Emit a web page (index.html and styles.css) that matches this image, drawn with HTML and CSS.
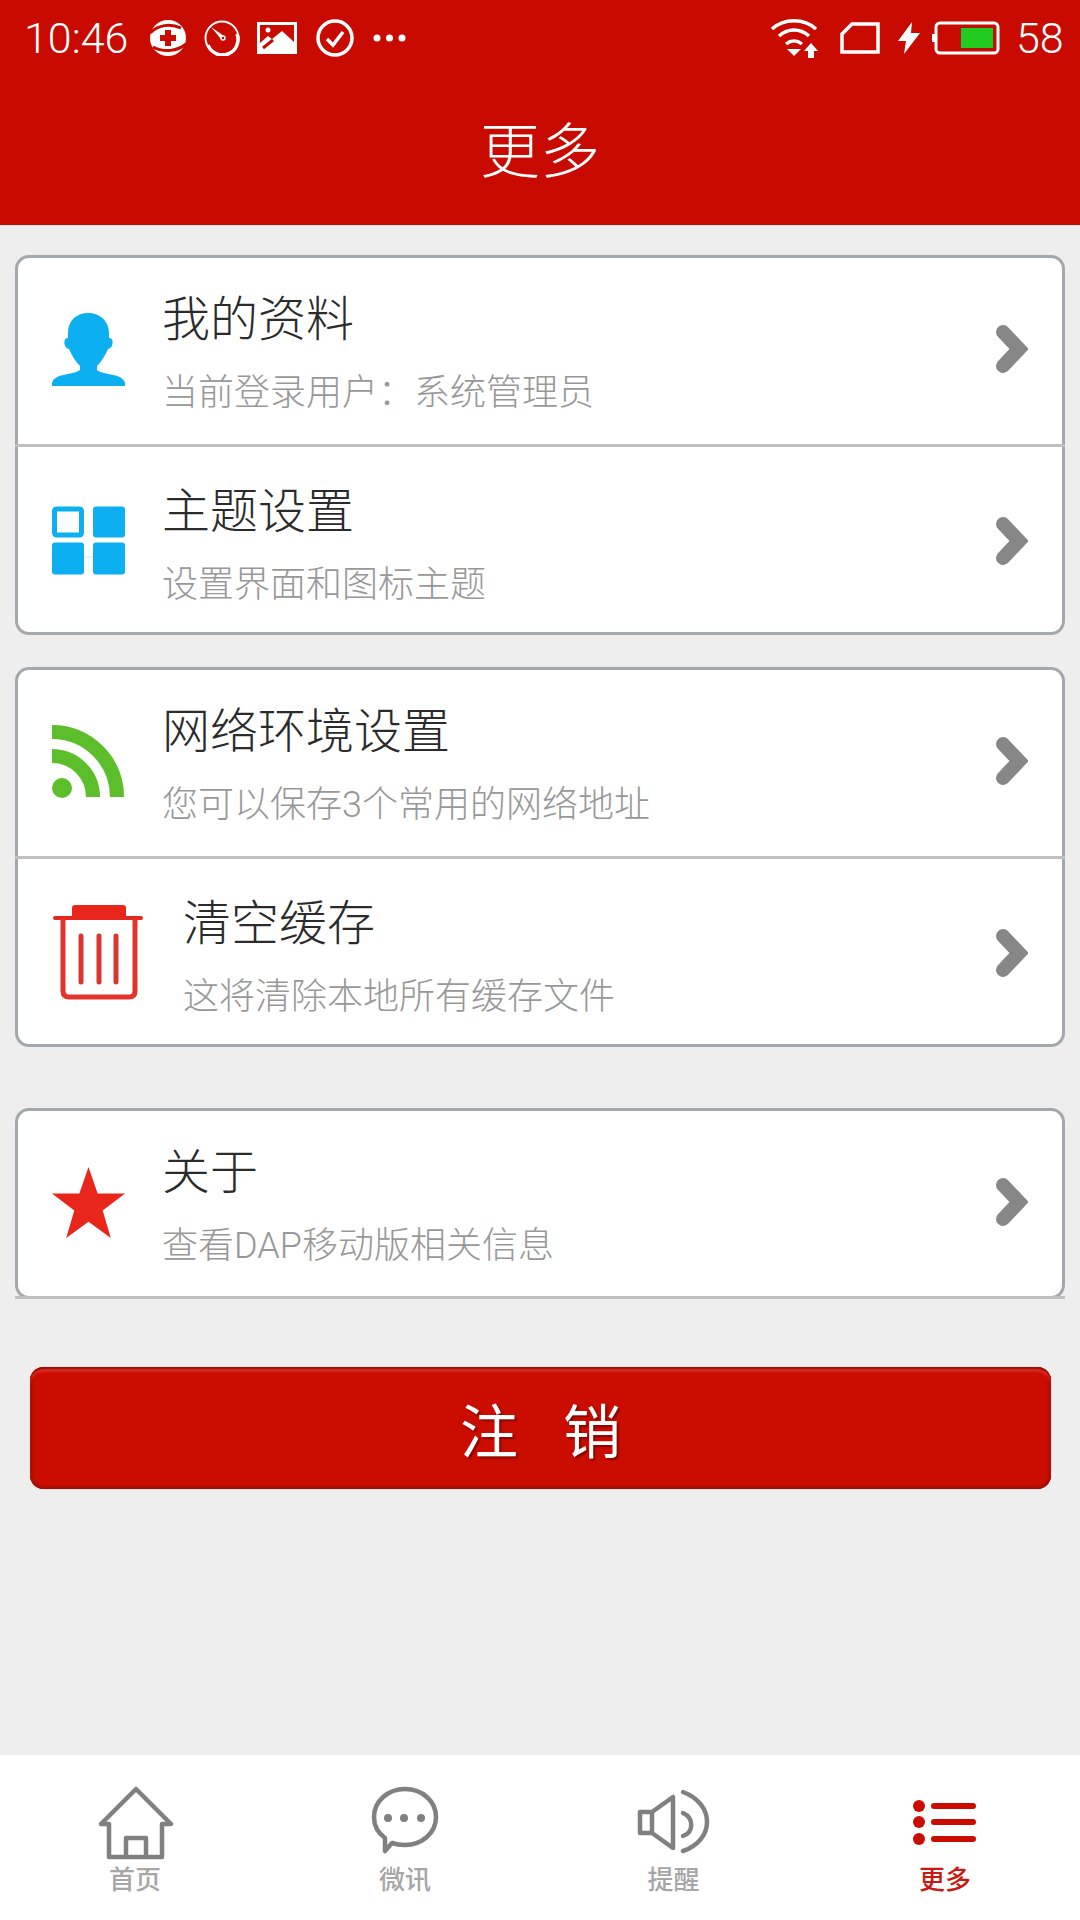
FILE: index.html
```html
<!DOCTYPE html>
<html lang="zh-CN">
<head>
<meta charset="utf-8">
<title>更多</title>
<link rel="stylesheet" href="styles.css">
</head>
<body>
<div class="page">
  <header class="header">
    <div class="status">
      <span class="time">10:46</span>
      <svg class="si si-health" viewBox="0 0 36 36"><circle class="wf" cx="18" cy="18" r="18"/><path class="rs" d="M0 13C8 5 20 3 31 8M36 24C28 31 14 33 3 27"/><path class="rf" d="M15 10H21V15H26V21H21V26H15V21H10V15H15Z"/></svg>
      <svg class="si si-clock" viewBox="0 0 36 36"><circle class="ws1" cx="18" cy="18" r="16.500"/><path class="ws3" d="M33 14A15.500 15.500 0 0 1 4 25"/><path class="wf" d="M7 7L20 16L17 19Z"/><circle class="dial-pin" cx="19" cy="18" r="2"/></svg>
      <svg class="si si-image" viewBox="0 0 40 32"><path class="wf" fill-rule="evenodd" d="M0 0H40V32H0ZM3 3V21L11 14L15 17L25 9L37 20V3Z"/><circle class="wf" cx="11" cy="8" r="2.500"/><path class="rs" d="M6 26L16 18"/></svg>
      <svg class="si si-check" viewBox="0 0 38 38"><circle class="ws3" cx="19" cy="19" r="17"/><path class="ws3" d="M11 20L17 26L27 13"/></svg>
      <svg class="si si-dots" viewBox="0 0 33 8"><circle class="wf" cx="4" cy="4" r="3.500"/><circle class="wf" cx="16.500" cy="4" r="3.500"/><circle class="wf" cx="29" cy="4" r="3.500"/></svg>
      <span class="status-fill"></span>
      <svg class="si si-wifi" viewBox="0 0 48 40"><path class="ws3" d="M2 11C14 0 34 0 46 11M9 18C18 10 30 10 39 18M16 26C21 22 27 22 32 26"/><path class="wf" d="M17 31H31L24 38Z"/><path class="wf" d="M41 25L48 33H44V40H38V33H34Z"/></svg>
      <svg class="si si-sim" viewBox="0 0 40 32"><path class="ws3" d="M12 2H38V30H2V12Z"/></svg>
      <svg class="si si-bolt" viewBox="0 0 22 32"><path class="wf" d="M14 0L0 19H8L6 32L22 11H13Z"/></svg>
      <svg class="si si-battery" viewBox="0 0 68 34"><path class="wf" d="M0 13H4V21H0Z"/><rect class="ws-batt" x="4" y="2" width="62" height="30" rx="4"/><rect class="batt-empty" x="8" y="6" width="20" height="22"/><rect class="batt-track" x="28" y="6" width="34" height="22"/><rect class="batt-level" x="29" y="7" width="32" height="20"/></svg>
      <span class="battery-num">58</span>
    </div>
    <h1 class="title">更多</h1>
  </header>

  <main class="main">
    <section class="card">
      <div class="row">
        <svg class="ico" viewBox="0 0 73 73"><path class="blue" d="M36 0C24 0 16 8 16 20V25C11 24 11 35 17 36C20 43 24 49 28 53V57C22 62 2 60 0 70V73H73V70C71 60 50 62 45 57V53C49 49 53 43 56 36C62 35 62 24 57 25V20C57 8 48 0 36 0Z"/></svg>
        <div class="text"><div class="name">我的资料</div><div class="desc">当前登录用户：系统管理员</div></div>
        <svg class="chev" viewBox="0 0 34 52"><path d="M9 9L25 26L9 43"/></svg>
      </div>
      <div class="row">
        <svg class="ico" viewBox="0 0 73 68"><rect class="tile-hollow" x="2.500" y="2.500" width="27" height="26" rx="2"/><rect class="blue" x="41" y="0" width="32" height="31" rx="3"/><rect class="blue" x="0" y="36" width="32" height="32" rx="3"/><rect class="blue" x="41" y="36" width="32" height="32" rx="3"/><rect class="tile-link" x="32" y="50" width="9" height="1"/></svg>
        <div class="text"><div class="name">主题设置</div><div class="desc">设置界面和图标主题</div></div>
        <svg class="chev" viewBox="0 0 34 52"><path d="M9 9L25 26L9 43"/></svg>
      </div>
    </section>

    <section class="card">
      <div class="row">
        <svg class="ico" viewBox="0 0 73 73"><path class="rss" d="M0 7A65 65 0 0 1 65 72M0 31A41 41 0 0 1 41 72"/><circle class="rss-dot" cx="10" cy="63" r="10"/></svg>
        <div class="text"><div class="name">网络环境设置</div><div class="desc">您可以保存3个常用的网络地址</div></div>
        <svg class="chev" viewBox="0 0 34 52"><path d="M9 9L25 26L9 43"/></svg>
      </div>
      <div class="row row-wide">
        <svg class="ico ico-trash" viewBox="0 0 90 96"><rect class="trash-top" x="19" y="0" width="54" height="13" rx="3"/><rect class="trash-top" x="0" y="11" width="90" height="4" rx="2"/><path class="trash-line" d="M10 14V86Q10 92 16 92H76Q82 92 82 86V14"/><path class="trash-bar" d="M28 31V77M46 31V77M63 31V77"/></svg>
        <div class="text"><div class="name">清空缓存</div><div class="desc">这将清除本地所有缓存文件</div></div>
        <svg class="chev" viewBox="0 0 34 52"><path d="M9 9L25 26L9 43"/></svg>
      </div>
    </section>

    <section class="card card-open">
      <div class="row">
        <svg class="ico" viewBox="0 0 72 70"><path class="star" d="M36 0L45 26L72 26L50 43L58 70L36 54L14 70L22 43L0 26L27 26Z"/></svg>
        <div class="text"><div class="name">关于</div><div class="desc">查看DAP移动版相关信息</div></div>
        <svg class="chev" viewBox="0 0 34 52"><path d="M9 9L25 26L9 43"/></svg>
      </div>
    </section>

    <button class="logout" type="button">注 销</button>
  </main>

  <nav class="tabbar">
    <div class="tab">
      <svg class="tab-ico" viewBox="0 0 80 76"><path class="tab-line" d="M6 38L41 3L76 38H67V71H14V38Z"/><path class="tab-line" d="M31 71V52H51V71"/></svg>
      <span class="tab-label">首页</span>
    </div>
    <div class="tab">
      <svg class="tab-ico" viewBox="0 0 80 76"><path class="tab-line" d="M40 3C57 3 71 15 71 31C71 47 57 59 40 59C35 59 30 58 27 57L20 65L20 52C13 47 9 40 9 31C9 15 23 3 40 3Z"/><circle class="tab-fill" cx="23" cy="32" r="4"/><circle class="tab-fill" cx="39" cy="32" r="4"/><circle class="tab-fill" cx="56" cy="32" r="4"/></svg>
      <span class="tab-label">微讯</span>
    </div>
    <div class="tab tab-speaker">
      <svg class="tab-ico" viewBox="0 0 80 76"><path class="tab-line" d="M5 26H17V47H5ZM17 26L38 11V62L17 47Z"/><path class="tab-line tab-round" d="M48 27C59 32 59 46 48 50M48 6C80 18 80 54 48 65"/></svg>
      <span class="tab-label">提醒</span>
    </div>
    <div class="tab tab-on">
      <svg class="tab-ico" viewBox="0 0 80 76"><circle class="tab-fill" cx="14" cy="20" r="6"/><circle class="tab-fill" cx="14" cy="36" r="6"/><circle class="tab-fill" cx="14" cy="53" r="6"/><path class="tab-line tab-round" d="M29 20H68M29 36H68M29 53H68"/></svg>
      <span class="tab-label">更多</span>
    </div>
  </nav>
</div>
</body>
</html>
```

FILE: styles.css
```css
* { box-sizing: border-box; }
html, body { margin: 0; padding: 0; }
body {
  width: 1080px;
  height: 1920px;
  overflow: hidden;
  font-family: "Noto Sans CJK SC", "Noto Sans", sans-serif;
  background: #eeeeee;
}
.page { display: flex; flex-direction: column; width: 1080px; height: 1920px; }

.header { height: 225px; background: #c80a00; color: #fff; flex: none; }
.status {
  display: flex;
  align-items: center;
  height: 75px;
  padding: 0 20px 0 24px;
  font-family: Roboto, sans-serif;
  font-weight: 300;
  font-size: 43px;
  color: #fff;
}
.time { width: 126px; }
.si { display: block; flex: none; }
.si-health { width: 36px; height: 36px; }
.si-clock { width: 36px; height: 36px; margin-left: 18px; }
.si-image { width: 40px; height: 32px; margin-left: 17px; }
.si-check { width: 38px; height: 38px; margin-left: 19px; }
.si-dots { width: 33px; height: 8px; margin-left: 19px; }
.status-fill { flex: 1; }
.si-wifi { width: 48px; height: 40px; }
.si-sim { width: 40px; height: 32px; margin-left: 22px; }
.si-bolt { width: 22px; height: 32px; margin-left: 18px; }
.si-battery { width: 68px; height: 34px; margin-left: 12px; }
.battery-num { margin-left: 16px; width: 44px; }
.wf { fill: #fff; }
.rf { fill: #c80a00; }
.dial-pin { fill: #c80a00; stroke: #fff; stroke-width: 1.500; }
.ws1, .ws3, .ws-batt { fill: none; stroke: #fff; }
.ws1 { stroke-width: 2; }
.ws3 { stroke-width: 3.500; }
.ws-batt { stroke-width: 3; }
.rs { fill: none; stroke: #c80a00; stroke-width: 3; }
.batt-empty { fill: #c80a00; }
.batt-track { fill: #a01a08; }
.batt-level { fill: #22cc1e; }

.title {
  margin: 0;
  height: 150px;
  padding-top: 32px;
  text-align: center;
  font-size: 60px;
  line-height: 80px;
  font-weight: 300;
}

.main { flex: 1; padding: 30px 15px 0; display: flex; flex-direction: column; }
.card {
  background: #fff;
  border: 3px solid #a2a8ab;
  border-radius: 14px;
  margin-bottom: 32px;
}
.card:nth-child(2) { margin-bottom: 61px; }
.card-open { position: relative; height: 191px; margin-bottom: 0; }
.card-open::after {
  content: "";
  position: absolute;
  left: -3px;
  right: -3px;
  bottom: -3px;
  height: 3px;
  background: #c0c0c0;
}

.row {
  display: flex;
  align-items: center;
  height: 186px;
  padding: 0 34px 4px 34px;
}
.row + .row {
  height: 188px;
  margin: 0 -3px;
  padding: 2px 37px 0;
  border-top: 3px solid #c0c0c0;
}
.row.row-wide { padding-left: 38px; }
.ico { display: block; width: 73px; height: 73px; flex: none; }
.ico-trash { width: 90px; height: 96px; }
.text { flex: 1; margin-left: 37px; padding-top: 4px; }
.row + .row .text { padding-top: 6px; }
.row-wide .text { margin-left: 40px; }
.name { font-size: 48px; line-height: 60px; color: #2b2b2b; font-weight: 300; }
.desc {
  margin-top: 23px;
  font-family: Roboto, "Noto Sans CJK SC", sans-serif;
  font-size: 36px;
  line-height: 50px;
  color: #989898;
  font-weight: 300;
}
.chev { display: block; width: 34px; height: 52px; flex: none; }
.chev path { fill: none; stroke: #878787; stroke-width: 14; stroke-linecap: round; stroke-linejoin: miter; }
.blue { fill: #0cb0f0; }
.tile-hollow { fill: #fff; stroke: #0cb0f0; stroke-width: 5; }
.tile-link { fill: #cfeaf6; }
.rss { fill: none; stroke: #5bbe2a; stroke-width: 14; }
.rss-dot { fill: #5bbe2a; }
.trash-top { fill: #e9261c; }
.trash-line { fill: none; stroke: #e0342c; stroke-width: 5; }
.trash-bar { fill: none; stroke: #d9362f; stroke-width: 5; stroke-linecap: round; }
.star { fill: #e9261c; }

.logout {
  display: block;
  width: 1021px;
  height: 122px;
  margin: 68px 0 0 15px;
  padding: 0;
  border: 0;
  border-radius: 14px;
  background: #cb0d00;
  box-shadow: inset 0 2px 1px #9c1006, inset 0 5px 2px #d62a20, inset 0 -3px 2px #a30f04, inset 3px 0 2px #a81006, inset -3px 0 2px #a81006, 0 0 1px rgba(200, 10, 0, 0.5);
  color: #fff;
  font-family: "Noto Sans CJK SC", sans-serif;
  font-size: 58px;
  font-weight: 400;
  word-spacing: 32px;
  text-shadow: 2px 2px 2px rgba(90, 0, 0, 0.6);
}

.tabbar { display: flex; height: 165px; flex: none; background: #fff; }
.tab { flex: 1; display: flex; flex-direction: column; align-items: center; padding-top: 31px; color: #a6a6a6; }
.tab-ico { display: block; width: 80px; height: 76px; }
.tab-label { font-size: 26px; line-height: 32px; font-weight: 500; }
.tab-speaker .tab-label { margin-right: 3px; }
.tab-line { fill: none; stroke: #808080; stroke-width: 4.500; stroke-linejoin: round; }
.tab-round { stroke-linecap: round; }
.tab-fill { fill: #808080; }
.tab-on { color: #c81a12; }
.tab-on .tab-line { stroke: #cb0d00; stroke-width: 6; }
.tab-on .tab-fill { fill: #cb0d00; }
```
